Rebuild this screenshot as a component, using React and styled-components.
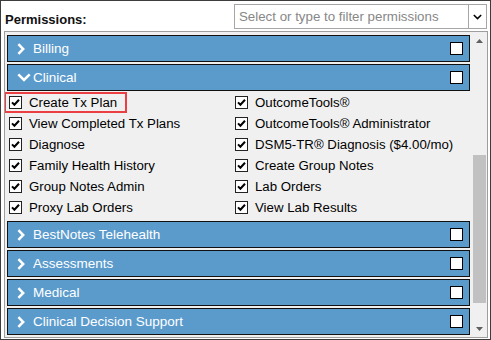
import React from "react";
import styled, { createGlobalStyle } from "styled-components";

const GlobalStyle = createGlobalStyle`
  html, body {
    margin: 0;
    padding: 0;
    background: #ffffff;
    font-family: "Liberation Sans", Arial, sans-serif;
  }
`;

const Frame = styled.div`
  width: 491px;
  height: 340px;
  box-sizing: border-box;
  border: 1px solid #3c3c3c;
  background: #ffffff;
  padding: 3px 2px 1px 3px;
  display: flex;
  flex-direction: column;
`;

const Header = styled.div`
  height: 25px;
  margin-bottom: 2px;
  display: flex;
  justify-content: space-between;
`;

const Label = styled.div`
  align-self: flex-end;
  padding: 0 0 2px 1px;
  font-size: 13px;
  line-height: 15px;
  font-weight: bold;
  color: #111;
`;

const Select = styled.div`
  width: 253px;
  margin-right: 1px;
  box-sizing: border-box;
  border: 1px solid #a6a6a6;
  background: #fff;
  display: flex;
`;

const Placeholder = styled.div`
  flex: 1;
  padding-left: 4px;
  font-size: 13.3px;
  line-height: 23px;
  color: #878787;
  white-space: nowrap;
  overflow: hidden;
`;

const SelectArrow = styled.div`
  width: 17px;
  border-left: 1px solid #a6a6a6;
  display: flex;
  align-items: center;
  justify-content: center;
`;

const Panel = styled.div`
  flex: 1;
  box-sizing: border-box;
  border: 1px solid #9e9e9e;
  background: #f0f0f0;
  display: flex;
  overflow: hidden;
`;

const Content = styled.div`
  flex: 1;
  padding: 3px 0 0 2px;
  display: flex;
  flex-direction: column;
`;

const Bar = styled.div`
  height: 27px;
  flex-shrink: 0;
  box-sizing: border-box;
  margin-bottom: 2px;
  border: 1px solid #111;
  background: #5b9bcc;
  display: flex;
  align-items: center;
  padding: 0 6px 0 9px;
`;

const IconSlot = styled.div`
  width: 16px;
  display: flex;
  align-items: center;
`;

const BarTitle = styled.div`
  flex: 1;
  color: #fff;
  font-size: 13.5px;
  line-height: 16px;
`;

const BarBox = styled.div`
  width: 13px;
  height: 13px;
  box-sizing: border-box;
  border: 1px solid #000;
  background: #fff;
`;

const List = styled.div`
  margin: -1px 0 3px;
  padding-left: 2px;
  display: grid;
  grid-template-columns: 226px 1fr;
  grid-auto-rows: 21px;
`;

const Item = styled.label`
  position: relative;
  width: fit-content;
  display: flex;
  align-items: center;
  gap: 7px;
  font-size: 13.25px;
  color: #000;
  white-space: nowrap;

  ${(p) =>
    p.$highlight &&
    `
    &::after {
      content: "";
      position: absolute;
      top: 0;
      bottom: 0;
      left: -5px;
      right: -10px;
      border: 2px solid #ec3f44;
    }
  `}
`;

const Check = styled.span`
  width: 13px;
  height: 13px;
  box-sizing: border-box;
  border: 1px solid #222;
  background: #fff;
  display: flex;
  align-items: center;
  justify-content: center;
`;

const Scrollbar = styled.div`
  width: 17px;
  display: flex;
  flex-direction: column;
`;

const ScrollArrow = styled.div`
  height: 17px;
  flex-shrink: 0;
  display: flex;
  align-items: center;
  justify-content: center;
  padding-left: 1px;
`;

const Track = styled.div`
  flex: 1;
`;

const Thumb = styled.div`
  margin: 106px 0 0 3px;
  width: 13px;
  height: 148px;
  background: #c1c1c1;
`;

const ChevronRight = () => (
  <svg width="8" height="12" viewBox="0 0 8 12">
    <path d="M1.4 1.2 L6.2 6 L1.4 10.8" fill="none" stroke="#fff" strokeWidth="2.5" />
  </svg>
);

const ChevronDown = ({ color = "#fff", w = 14, h = 9, sw = 2.5 }) => (
  <svg width={w} height={h} viewBox="0 0 14 9">
    <path d="M1.3 1.4 L7 7 L12.7 1.4" fill="none" stroke={color} strokeWidth={sw} />
  </svg>
);

const Tick = () => (
  <svg width="11" height="11" viewBox="0 0 11 11">
    <path d="M2 5.4 L4.4 7.8 L9 2.8" fill="none" stroke="#000" strokeWidth="2" />
  </svg>
);

const Triangle = ({ up }) => (
  <svg width="7" height="4" viewBox="0 0 7 4">
    <path d={up ? "M0 4 L3.5 0 L7 4 Z" : "M0 0 L7 0 L3.5 4 Z"} fill="#5f5f5f" />
  </svg>
);

const clinical = [
  "Create Tx Plan",
  "OutcomeTools®",
  "View Completed Tx Plans",
  "OutcomeTools® Administrator",
  "Diagnose",
  "DSM5-TR® Diagnosis ($4.00/mo)",
  "Family Health History",
  "Create Group Notes",
  "Group Notes Admin",
  "Lab Orders",
  "Proxy Lab Orders",
  "View Lab Results",
];

const Section = ({ title, expanded }) => (
  <Bar>
    <IconSlot>{expanded ? <ChevronDown /> : <ChevronRight />}</IconSlot>
    <BarTitle>{title}</BarTitle>
    <BarBox />
  </Bar>
);

export default function App() {
  return (
    <>
      <GlobalStyle />
      <Frame>
        <Header>
          <Label>Permissions:</Label>
          <Select>
            <Placeholder>Select or type to filter permissions</Placeholder>
            <SelectArrow>
              <ChevronDown color="#000" w={9} h={6} sw={2.4} />
            </SelectArrow>
          </Select>
        </Header>
        <Panel>
          <Content>
            <Section title="Billing" />
            <Section title="Clinical" expanded />
            <List>
              {clinical.map((name, i) => (
                <Item key={name} $highlight={i === 0}>
                  <Check>
                    <Tick />
                  </Check>
                  {name}
                </Item>
              ))}
            </List>
            <Section title="BestNotes Telehealth" />
            <Section title="Assessments" />
            <Section title="Medical" />
            <Section title="Clinical Decision Support" />
          </Content>
          <Scrollbar>
            <ScrollArrow>
              <Triangle up />
            </ScrollArrow>
            <Track>
              <Thumb />
            </Track>
            <ScrollArrow>
              <Triangle />
            </ScrollArrow>
          </Scrollbar>
        </Panel>
      </Frame>
    </>
  );
}
